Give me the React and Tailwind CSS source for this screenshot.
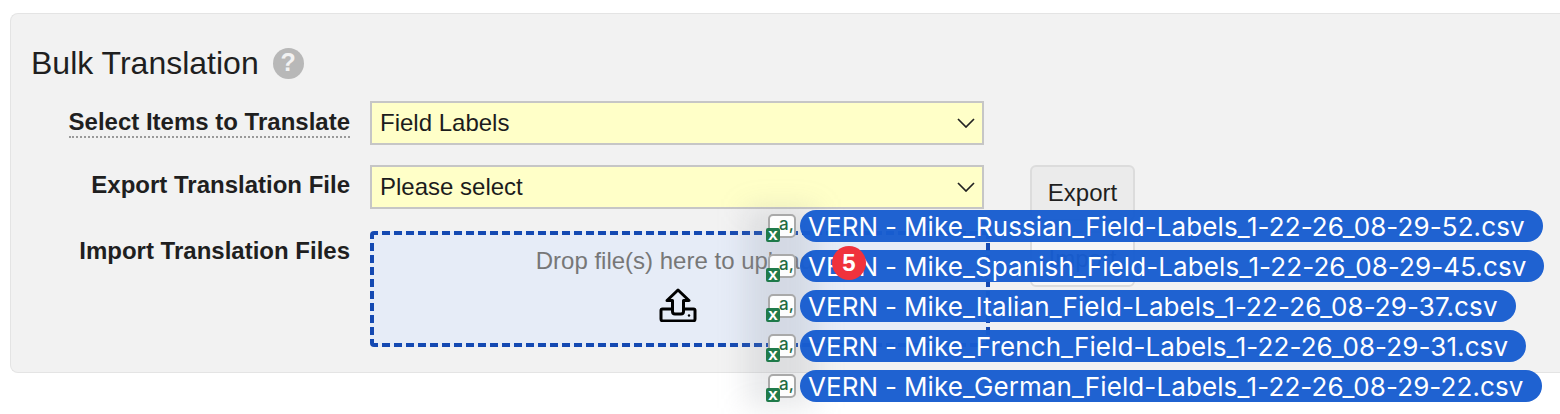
const files = [
  'VERN - Mike_Russian_Field-Labels_1-22-26_08-29-52.csv',
  'VERN - Mike_Spanish_Field-Labels_1-22-26_08-29-45.csv',
  'VERN - Mike_Italian_Field-Labels_1-22-26_08-29-37.csv',
  'VERN - Mike_French_Field-Labels_1-22-26_08-29-31.csv',
  'VERN - Mike_German_Field-Labels_1-22-26_08-29-22.csv',
]

function Chevron() {
  return (
    <svg width="18" height="10" viewBox="0 0 18 10" fill="none" stroke="#222" strokeWidth="1.7">
      <path d="M1 1l8 8 8-8" />
    </svg>
  )
}

function SelectBox({ value }) {
  return (
    <div className="flex h-[44px] w-[614px] items-center justify-between border-2 border-[#c6c6c6] bg-[#ffffc8] pl-[8px] pr-[7px] text-[24px] text-[#1c1c1c]">
      <span>{value}</span>
      <Chevron />
    </div>
  )
}

function CsvIcon() {
  return (
    <svg width="32" height="32" viewBox="0 0 32 32" className="shrink-0 overflow-visible">
      <rect x="3" y="5" width="26" height="22" rx="4" fill="#fdfdfd" stroke="#a9a9a9" strokeWidth="2" />
      <text x="13" y="20" fontFamily="Inter, sans-serif" fontSize="17" fontWeight="500" fill="#1f6b41">a,</text>
      <rect x="0" y="18" width="14" height="14" rx="2" fill="#1f7a4a" />
      <text x="7" y="30" textAnchor="middle" fontFamily="Liberation Sans, sans-serif" fontWeight="700" fontSize="17" fill="#fff">x</text>
    </svg>
  )
}

export default function App() {
  return (
    <div className="relative h-[414px] w-[1560px] overflow-hidden bg-white font-['Liberation_Sans',sans-serif]">
      <div className="ml-[10px] h-[360px] translate-y-[13px] rounded-l-[8px] border border-r-0 border-[#e4e4e4] bg-[#f2f2f2]">
        <div className="flex items-center gap-[14px] pl-[20px] pt-[31px]">
          <h2 className="text-[32px] leading-[36px] text-[#1f1f1f]">Bulk Translation</h2>
          <div className="flex h-[31px] w-[31px] items-center justify-center rounded-full bg-[#b8b8b8] text-[25px] font-bold text-[#f2f2f2]">?</div>
        </div>

        <div className="mt-[20px] flex items-center gap-[20px]">
          <div className="flex w-[339px] justify-end">
            <span className="border-b-2 border-dotted border-[#9a9a9a] text-[24px] font-bold leading-[28px] text-[#1f1f1f]">Select Items to Translate</span>
          </div>
          <SelectBox value="Field Labels" />
        </div>

        <div className="mt-[20px] flex items-start gap-[20px]">
          <div className="w-[339px] pt-[6px] text-right text-[24px] font-bold leading-[28px] text-[#1f1f1f]">Export Translation File</div>
          <SelectBox value="Please select" />
          <button className="ml-[26px] h-[56px] w-[105px] rounded-[6px] border-2 border-[#dcdcdc] bg-[#ebebeb] text-[24px] text-[#1f1f1f]">Export</button>
        </div>

        <div className="mt-[10px] flex items-start gap-[20px]">
          <div className="w-[339px] pt-[6px] text-right text-[24px] font-bold leading-[28px] text-[#1f1f1f]">Import Translation Files</div>
          <div className="flex h-[116px] w-[620px] flex-col items-center rounded-[4px] border-[4px] border-dashed border-[#1449b2] bg-[#e6ecf7] pt-[12px]">
            <div className="pr-[11px] text-[24px] leading-[28px] text-[#777]">Drop file(s) here to upload</div>
            <svg width="38" height="34" viewBox="0 0 38 34" fill="none" stroke="#000" strokeWidth="3" strokeLinejoin="round" className="-ml-[4px] mt-[13px]">
              <path d="M19 2L30 12.5H24.5V23.5Q24.5 26 22 26H16Q13.5 26 13.5 23.5V12.5H8Z" />
              <path d="M12 21H3.5Q2 21 2 22.5V31Q2 33 4 33H34Q36 33 36 31V22.5Q36 21 34.5 21H26" />
              <circle cx="30" cy="27.5" r="1.2" fill="#000" stroke="none" />
            </svg>
          </div>
          <button className="ml-[20px] h-[56px] w-[105px] rounded-[6px] border-2 border-[#dcdcdc] bg-[#f7f7f7] text-[24px] text-[#1f1f1f]">Import</button>
        </div>
      </div>

      {/* drag preview sitting over the form */}
      <div className="absolute left-[766px] top-[210px] flex flex-col gap-[8px]">
        <div className="absolute -bottom-[6px] -left-[20px] -top-[2px] w-[70px] bg-[#8a8f99]/20 blur-[14px]" />
        {files.map((name) => (
          <div key={name} className="relative flex h-[32px] items-center gap-[2px]">
            <CsvIcon />
            <div className="flex h-[32px] items-center whitespace-nowrap rounded-full bg-[#185dcf]/[0.97] pl-[8px] pr-[18px] font-['Inter',sans-serif] text-[26px] tracking-[0.1px] [word-spacing:-0.6px] text-white">
              {name}
            </div>
          </div>
        ))}
      </div>

      <div className="absolute left-[832px] top-[246px] flex h-[34px] w-[34px] items-center justify-center rounded-full bg-[#f0323c] text-[24px] font-bold text-white">5</div>
    </div>
  )
}
